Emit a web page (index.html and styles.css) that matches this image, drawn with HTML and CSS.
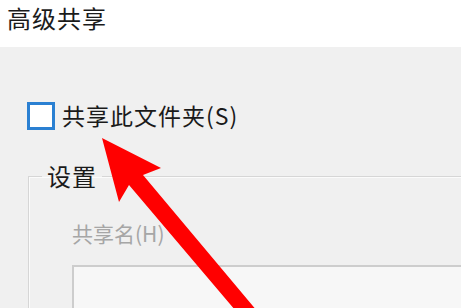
FILE: index.html
```html
<!DOCTYPE html>
<html lang="zh-CN">
<head>
<meta charset="utf-8">
<title>高级共享</title>
<link rel="stylesheet" href="styles.css">
</head>
<body>
<div class="window">
  <div class="titlebar"><span class="title">高级共享</span></div>
  <div class="content">
    <label class="check-row">
      <span class="checkbox"></span>
      <span class="check-label">共享此文件夹(S)</span>
    </label>
    <fieldset class="group">
      <legend class="legend">设置</legend>
      <div class="field-label">共享名(H)</div>
      <div class="input"></div>
    </fieldset>
  </div>
  <svg class="arrow" width="461" height="308" viewBox="0 0 461 308">
    <polygon points="102,138 161,168 143,175 273,330 252,330 129,185 119,202" fill="#ff0000"/>
  </svg>
</div>
</body>
</html>
```

FILE: styles.css
```css
html, body {
  margin: 0;
  padding: 0;
}
body {
  width: 461px;
  height: 308px;
  overflow: hidden;
  background: #f0f0f0;
  font-family: "Noto Sans CJK SC", "Microsoft YaHei", sans-serif;
  color: #1a1a1a;
}
.window {
  position: relative;
  width: 461px;
  height: 308px;
  overflow: hidden;
}
.titlebar {
  height: 47px;
  background: #ffffff;
  box-sizing: border-box;
  padding: 0 0 0 7px;
}
.title {
  font-size: 24px;
  line-height: 35px;
  letter-spacing: 1px;
  color: #1b1b1b;
  display: block;
}
.content {
  padding: 55px 0 0 27px;
}
.check-row {
  display: flex;
  align-items: center;
  gap: 7px;
  height: 28px;
}
.checkbox {
  width: 28px;
  height: 28px;
  box-sizing: border-box;
  border: 3px solid #2a80d2;
  background: #ffffff;
  flex: none;
}
.check-label {
  font-size: 23px;
  line-height: 28px;
  letter-spacing: 1px;
  color: #1a1a1a;
  margin-top: -3px;
}
.group {
  margin: 34px 0 0 1px;
  padding: 0;
  width: 600px;
  height: 300px;
  border: 1px solid #d6d6d6;
  box-shadow: inset 1px 1px 0 #fbfbfb;
  min-width: 0;
}
.legend {
  margin-left: 13px;
  padding: 0 5px;
  font-size: 24px;
  line-height: 24px;
  letter-spacing: 1px;
  color: #1a1a1a;
}
.field-label {
  margin: 34px 0 0 43px;
  font-size: 21px;
  line-height: 22px;
  color: #a6a6a6;
}
.input {
  margin: 21px 0 0 43px;
  width: 600px;
  height: 80px;
  box-sizing: border-box;
  border: 2px solid #cdcdcd;
  background: #f7f7f7;
}
.arrow {
  position: absolute;
  left: 0;
  top: 0;
}
```
